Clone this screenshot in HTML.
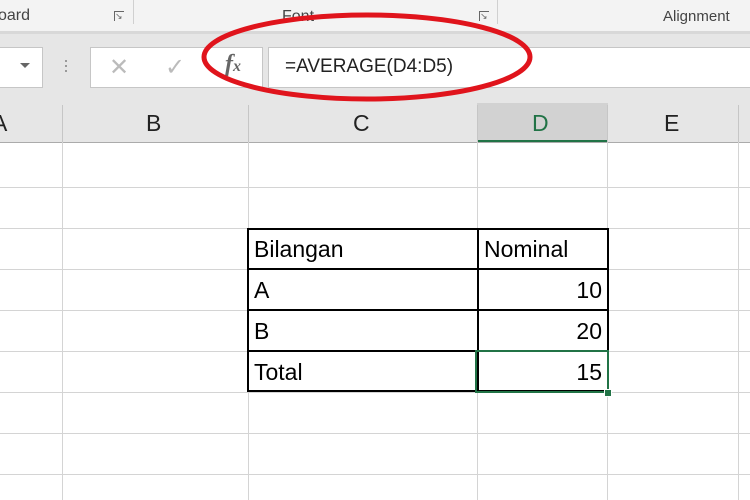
<!DOCTYPE html>
<html><head><style>
body{margin:0;width:750px;height:500px;overflow:hidden;background:#fff;font-family:"Liberation Sans",sans-serif;position:relative}
.a{position:absolute}
.vl{position:absolute;width:1px;background:#d4d4d4;top:142px;height:358px}
.hl{position:absolute;height:1px;background:#d4d4d4;left:0;width:750px}
.ct{position:absolute;font-size:23px;color:#000}
.num{position:absolute;font-size:23px;color:#000;right:148px}
</style></head><body>
<div class="a" style="left:0;top:0;width:750px;height:31px;background:#f3f3f3"></div>
<div class="a" style="left:-2px;top:7px;font-size:16px;color:#444">oard</div>
<div class="a" style="left:282px;top:8px;font-size:16px;color:#444">Font</div>
<div class="a" style="left:663px;top:8px;font-size:15px;color:#444">Alignment</div>
<div class="a" style="left:133px;top:0;width:1px;height:24px;background:#d0d0d0"></div>
<div class="a" style="left:497px;top:0;width:1px;height:24px;background:#d0d0d0"></div>
<div class="a" style="left:114px;top:11px;width:9px;height:9px;border-left:1px solid #666;border-top:1px solid #666;font-size:9px;line-height:9px;color:#666">↘</div>
<div class="a" style="left:479px;top:11px;width:9px;height:9px;border-left:1px solid #666;border-top:1px solid #666;font-size:9px;line-height:9px;color:#666">↘</div>
<div class="a" style="left:0;top:31px;width:750px;height:72px;background:#e6e6e6"></div>
<div class="a" style="left:0;top:31px;width:750px;height:3px;background:#d8d8d8"></div>
<div class="a" style="left:-1px;top:47px;width:42px;height:39px;background:#fff;border:1px solid #c6c6c6"></div>
<div class="a" style="left:20px;top:63px;width:0;height:0;border-left:5px solid transparent;border-right:5px solid transparent;border-top:5px solid #666"></div>
<div class="a" style="left:65px;top:60px;width:2px;height:2px;background:#999;box-shadow:0 5px #999,0 10px #999"></div>
<div class="a" style="left:90px;top:47px;width:171px;height:39px;background:#fff;border:1px solid #c6c6c6"></div>
<div class="a" style="left:109px;top:53px;font-size:24px;color:#bbb">✕</div>
<div class="a" style="left:165px;top:53px;font-size:24px;color:#bbb">✓</div>
<div class="a" style="left:225px;top:51px;font-size:24px;font-style:italic;font-weight:bold;font-family:'Liberation Serif',serif;color:#666">f<span style="font-size:16px">x</span></div>
<div class="a" style="left:268px;top:47px;width:484px;height:39px;background:#fff;border:1px solid #c6c6c6"></div>
<div class="a" style="left:285px;top:56px;font-size:19px;color:#222">=AVERAGE(D4:D5)</div>
<div class="a" style="left:0;top:103px;width:750px;height:39px;background:#e6e6e6;border-bottom:1px solid #ababab"></div>
<div class="a" style="left:477px;top:103px;width:131px;height:37px;background:#d2d2d2;border-bottom:2px solid #217346"></div>
<div class="a" style="left:62px;top:105px;width:1px;height:37px;background:#c6c6c6"></div>
<div class="a" style="left:248px;top:105px;width:1px;height:37px;background:#c6c6c6"></div>
<div class="a" style="left:477px;top:105px;width:1px;height:37px;background:#c6c6c6"></div>
<div class="a" style="left:607px;top:105px;width:1px;height:37px;background:#c6c6c6"></div>
<div class="a" style="left:738px;top:105px;width:1px;height:37px;background:#c6c6c6"></div>
<div class="a" style="left:-8px;top:110px;font-size:23px;color:#222">A</div>
<div class="a" style="left:146px;top:110px;font-size:23px;color:#222">B</div>
<div class="a" style="left:353px;top:110px;font-size:23px;color:#222">C</div>
<div class="a" style="left:532px;top:110px;font-size:23px;color:#217346">D</div>
<div class="a" style="left:664px;top:110px;font-size:23px;color:#222">E</div>
<div class="vl" style="left:62px"></div><div class="vl" style="left:248px"></div><div class="vl" style="left:477px"></div><div class="vl" style="left:607px"></div><div class="vl" style="left:738px"></div>
<div class="hl" style="top:187px"></div><div class="hl" style="top:228px"></div><div class="hl" style="top:269px"></div><div class="hl" style="top:310px"></div><div class="hl" style="top:351px"></div><div class="hl" style="top:392px"></div><div class="hl" style="top:433px"></div><div class="hl" style="top:474px"></div>
<div class="a" style="left:247px;top:228px;width:362px;height:164px;border:2px solid #000;box-sizing:border-box"></div>
<div class="a" style="left:477px;top:228px;width:2px;height:164px;background:#000"></div>
<div class="a" style="left:247px;top:268px;width:362px;height:2px;background:#000"></div>
<div class="a" style="left:247px;top:309px;width:362px;height:2px;background:#000"></div>
<div class="a" style="left:247px;top:350px;width:362px;height:2px;background:#000"></div>
<div class="a" style="left:475px;top:350px;width:134px;height:43px;border:2px solid #217346;box-sizing:border-box"></div>
<div class="a" style="left:604px;top:389px;width:6px;height:6px;background:#217346;border:1px solid #fff"></div>
<div class="ct" style="left:254px;top:236px">Bilangan</div>
<div class="ct" style="left:254px;top:277px">A</div>
<div class="ct" style="left:254px;top:318px">B</div>
<div class="ct" style="left:254px;top:359px">Total</div>
<div class="ct" style="left:484px;top:236px">Nominal</div>
<div class="num" style="top:277px">10</div>
<div class="num" style="top:318px">20</div>
<div class="num" style="top:359px">15</div>
<svg class="a" style="left:0;top:0" width="750" height="500"><ellipse cx="367" cy="57" rx="163" ry="42" fill="none" stroke="#e0141c" stroke-width="5"/></svg>
</body></html>
